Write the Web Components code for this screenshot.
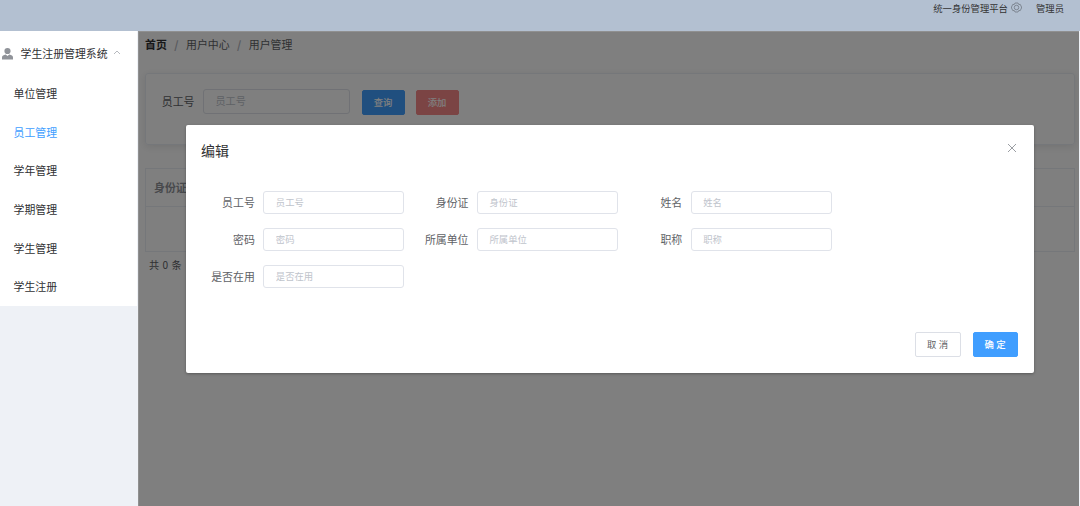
<!DOCTYPE html>
<html lang="zh-CN">
<head>
<meta charset="UTF-8">
<title>学生注册管理系统</title>
<style>
  html, body {
    margin: 0;
    height: 100%;
    overflow: hidden;
  }

  body {
    font-family: "Noto Sans CJK SC", sans-serif;
    font-size: 11px;
    color: #303133;
  }
</style>
</head>
<body>
<app-shell>
  <top-bar slot="header"></top-bar>
  <side-menu slot="aside"></side-menu>
  <user-page></user-page>
  <edit-dialog slot="dialog" heading="编辑">
    <form-field label="员工号"></form-field>
    <form-field label="身份证"></form-field>
    <form-field label="姓名"></form-field>
    <form-field label="密码"></form-field>
    <form-field label="所属单位"></form-field>
    <form-field label="职称"></form-field>
    <form-field label="是否在用"></form-field>
    <ui-button slot="footer" spaced>取消</ui-button>
    <ui-button slot="footer" type="primary" spaced>确定</ui-button>
  </edit-dialog>
</app-shell>

<script>
class AppShell extends HTMLElement {
  constructor() {
    super();
    const shadow = this.attachShadow({ mode: 'open' });
    shadow.innerHTML = `
      <style>
        :host {
          display: grid;
          grid-template: 31px 1fr / 138px 1fr;
          height: 100vh;
          overflow: hidden;
          background: #eef1f6;
        }

        header {
          grid-column: 1 / 3;
          background: #b3c0d1;
        }

        main {
          position: relative;
          min-width: 0;
          overflow: hidden;
          margin-right: 1px;
          background: #fff;
        }

        /* modal mask, covers the content frame only */
        .mask {
          position: absolute;
          inset: 0;
          background: rgba(0, 0, 0, 0.5);
          box-shadow: inset 1px 1px 0 #909090;
        }

        .dialog {
          position: absolute;
          top: 94px;
          left: 48px;
          width: 848px;
        }
      </style>
      <header><slot name="header"></slot></header>
      <aside><slot name="aside"></slot></aside>
      <main>
        <slot></slot>
        <div class="mask"></div>
        <div class="dialog"><slot name="dialog"></slot></div>
      </main>
    `;
  }
}

class TopBar extends HTMLElement {
  constructor() {
    super();
    const shadow = this.attachShadow({ mode: 'open' });
    shadow.innerHTML = `
      <style>
        :host {
          display: flex;
          justify-content: flex-end;
          align-items: center;
          height: 16px;
          padding-right: 16px;
          font-size: 9.35px;
          line-height: 16px;
          color: #333;
        }

        svg {
          width: 11px;
          height: 11px;
          margin: 0 14px 1px 3px;
        }
      </style>
      <span>统一身份管理平台</span>
      <svg viewBox="0 0 22 22" fill="none" stroke="#6d747e" stroke-width="1.5">
        <path d="M8 2h6l1.5 3 3-.2 2.5 5.2v2l-2.500 5.200-3-.2L14 20H8l-1.500-3-3 .2L1 12v-2l2.500-5.200 3 .2z"/>
        <circle cx="11" cy="11" r="4.500"/>
      </svg>
      <span>管理员</span>
    `;
  }
}

class SideMenu extends HTMLElement {
  constructor() {
    super();
    const items = ['单位管理', '员工管理', '学年管理', '学期管理', '学生管理', '学生注册'];
    const active = '员工管理';
    const shadow = this.attachShadow({ mode: 'open' });
    shadow.innerHTML = `
      <style>
        :host {
          display: block;
          width: 137px;
          height: 275px;
          background: #fff;
          font-size: 10.9px;
        }

        .title {
          display: flex;
          align-items: center;
          height: 43px;
        }

        .user {
          width: 13px;
          height: 13px;
          margin: 2px 6.5px 0 1px;
        }

        .arrow {
          width: 8px;
          height: 8px;
          margin-left: 5px;
        }

        ul {
          margin: 0;
          padding: 0;
          list-style: none;
        }

        li {
          height: 38.7px;
          line-height: 38.7px;
          padding-left: 13.5px;
        }

        li.active {
          color: #409eff;
        }
      </style>
      <div class="title">
        <svg class="user" viewBox="0 0 13 13" fill="#909399">
          <circle cx="6.500" cy="4" r="3.100"/>
          <path d="M1 12.500V10.500C1 8.600 2.500 8 4.700 7.500L6.500 9l1.800-1.500C10.500 8 12 8.600 12 10.500V12.500z"/>
        </svg>
        <span>学生注册管理系统</span>
        <svg class="arrow" viewBox="0 0 8 8" fill="none" stroke="#a5a8ae" stroke-width=".8">
          <path d="M1 5l3-3 3 3"/>
        </svg>
      </div>
      <ul>${items.map(t => `<li class="${t === active ? 'active' : ''}">${t}</li>`).join('')}</ul>
    `;
  }
}

class UiButton extends HTMLElement {
  constructor() {
    super();
    const shadow = this.attachShadow({ mode: 'open' });
    shadow.innerHTML = `
      <style>
        :host {
          display: flex;
          align-items: center;
          justify-content: center;
          box-sizing: border-box;
          width: 43px;
          height: 25px;
          border: 1px solid #dcdfe6;
          border-radius: 2px;
          background: #fff;
          color: #606266;
          font-size: 9.35px;
          line-height: 1;
        }

        :host([type="primary"]) {
          border-color: #409eff;
          background: #409eff;
          color: #fff;
          font-weight: 500;
        }

        :host([type="danger"]) {
          border-color: #f78989;
          background: #f78989;
          color: #fff;
          font-weight: 500;
        }

        :host([spaced]) {
          width: 45.5px;
          letter-spacing: 2.5px;
          text-indent: 2px;
        }
      </style>
      <slot></slot>
    `;
  }
}

class FormField extends HTMLElement {
  constructor() {
    super();
    const label = this.getAttribute('label');
    const shadow = this.attachShadow({ mode: 'open' });
    shadow.innerHTML = `
      <style>
        :host {
          display: flex;
          align-items: center;
          color: #606266;
        }

        label {
          width: var(--label-width, 44.5px);
          margin-right: 8.5px;
          padding-bottom: 1px;
          font-size: 10.9px;
          line-height: 21px;
          text-align: right;
          white-space: nowrap;
        }

        input {
          box-sizing: border-box;
          width: var(--input-width, 141px);
          height: var(--input-height, 23px);
          padding: 0 11.5px 2px;
          border: 1px solid #e0e3ea;
          border-radius: 3px;
          background: #fff;
          font: inherit;
          font-size: var(--input-font, 9.35px);
          outline: none;
        }

        input::placeholder {
          color: #c0c4cc;
          opacity: 1;
        }
      </style>
      <label>${label}</label>
      <input type="text" placeholder="${label}">
    `;
  }
}

class UserPage extends HTMLElement {
  constructor() {
    super();
    const shadow = this.attachShadow({ mode: 'open' });
    shadow.innerHTML = `
      <style>
        :host {
          display: block;
          padding: 0 4px 0 7px;
          color: #606266;
        }

        .breadcrumb {
          display: flex;
          height: 26px;
          line-height: 26px;
          font-size: 10.9px;
        }

        .breadcrumb b {
          color: #303133;
        }

        .breadcrumb i {
          margin: 0 7.5px;
          color: #b0b4bc;
          font-style: normal;
          font-weight: 700;
        }

        .card {
          display: flex;
          align-items: flex-start;
          box-sizing: border-box;
          height: 72px;
          margin: 16px 0 23px;
          padding: 15px;
          border: 1px solid #ebeef5;
          border-radius: 3px;
          box-shadow: 0 2px 9px rgba(0, 0, 0, 0.1);
          --label-width: 33.5px;
          --input-width: 147px;
          --input-height: 25px;
          --input-font: 10.100px;
        }

        .card ui-button {
          margin: 1px 0 0 11.500px;
        }

        .card ui-button + ui-button {
          margin-left: 11px;
        }

        table {
          width: 100%;
          height: 84px;
          border: 1px solid #ebeef5;
          border-collapse: collapse;
          font-size: 10.9px;
          text-align: left;
        }

        th {
          height: 35px;
          padding: 0 0 2px 8px;
          color: #909399;
          border-bottom: 1px solid #ebeef5;
        }

        .total {
          margin-left: 4px;
          line-height: 26px;
          font-size: 10.100px;
          word-spacing: 1.1px;
        }
      </style>
      <div class="breadcrumb">
        <b>首页</b><i>/</i><span>用户中心</span><i>/</i><span>用户管理</span>
      </div>
      <div class="card">
        <form-field label="员工号"></form-field>
        <ui-button type="primary">查询</ui-button>
        <ui-button type="danger">添加</ui-button>
      </div>
      <table>
        <tr><th>身份证</th></tr>
        <tr><td></td></tr>
      </table>
      <div class="total">共 0 条</div>
    `;
  }
}

class EditDialog extends HTMLElement {
  constructor() {
    super();
    const shadow = this.attachShadow({ mode: 'open' });
    shadow.innerHTML = `
      <style>
        :host {
          display: flex;
          flex-direction: column;
          box-sizing: border-box;
          height: 248px;
          padding: 0 16px 16px;
          border-radius: 2px;
          background: #fff;
          box-shadow: 0 1px 3px rgba(0, 0, 0, 0.3);
        }

        .head {
          display: flex;
          justify-content: space-between;
          align-items: center;
          height: 50px;
          margin-left: -1px;
          font-size: 14px;
          color: #303133;
        }

        .close {
          width: 10px;
          height: 10px;
          margin: 0 1px 5px 0;
        }

        .fields {
          display: grid;
          grid-template-columns: repeat(3, 213.700px);
          grid-auto-rows: 23px;
          row-gap: 14px;
          padding: 16px 0 0 8.300px;
        }

        .foot {
          display: flex;
          justify-content: flex-end;
          gap: 12px;
          margin-top: auto;
        }
      </style>
      <div class="head">
        <span>${this.getAttribute('heading')}</span>
        <svg class="close" viewBox="0 0 10 10" stroke="#909399" stroke-width=".9">
          <path d="M1 1l8 8M9 1L1 9"/>
        </svg>
      </div>
      <div class="fields"><slot></slot></div>
      <div class="foot"><slot name="footer"></slot></div>
    `;
  }
}

customElements.define('app-shell', AppShell);
customElements.define('top-bar', TopBar);
customElements.define('side-menu', SideMenu);
customElements.define('ui-button', UiButton);
customElements.define('form-field', FormField);
customElements.define('user-page', UserPage);
customElements.define('edit-dialog', EditDialog);
</script>
</body>
</html>
